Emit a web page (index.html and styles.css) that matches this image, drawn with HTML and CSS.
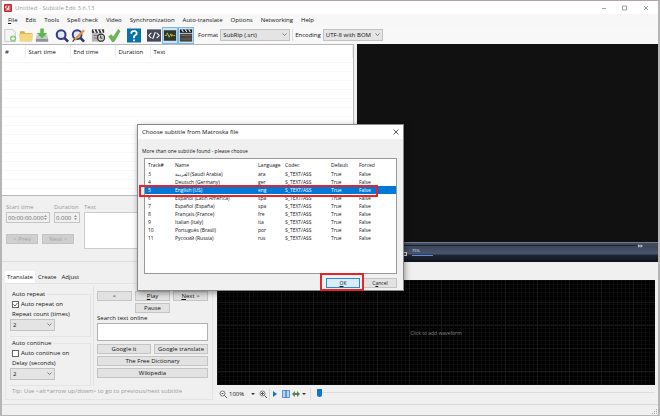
FILE: index.html
```html
<!DOCTYPE html>
<html lang="en">
<head>
    <meta charset="UTF-8">
    <meta name="viewport" content="width=device-width, initial-scale=1.0">
    <title>Untitled - Subtitle Edit 3.6.13</title>
    <link rel="stylesheet" href="styles.css">
</head>
<body>
    <div class="window">
        <header class="titlebar">
            <svg class="logo" viewBox="0 0 8 8"><rect width="8" height="8" rx="1" fill="#c8202c"/><path d="M3.5 2H1.5v2h2v2h-2M6.5 2h-2v4h2M4.5 4h2" fill="none" stroke="#fff" stroke-width=".8"/></svg>
            <span class="title">Untitled - Subtitle Edit 3.6.13</span>
            <svg class="win-buttons" viewBox="0 0 47 6"><path d="M0 3.500h4M20.500 1h4v4h-4zM42 1l4 4M46 1l-4 4" fill="none" stroke="#888" stroke-width=".8"/></svg>
        </header>

        <nav class="menubar">
            <a href="#"><u>F</u>ile</a>
            <a href="#">Edit</a>
            <a href="#">Tools</a>
            <a href="#">Spell check</a>
            <a href="#">Video</a>
            <a href="#">Synchronization</a>
            <a href="#">Auto-translate</a>
            <a href="#">Options</a>
            <a href="#">Networking</a>
            <a href="#">Help</a>
        </nav>

        <div class="toolbar">
            <button class="tool" aria-label="New"><svg viewBox="0 0 16 16"><path d="M2 1h9l3 3v11H2z" fill="#f4f4f4" stroke="#c4c4c4"/><circle cx="11.500" cy="11.500" r="3.500" fill="#8cc97a"/><path d="M11.500 9.500v4M9.500 11.500h4" stroke="#fff" stroke-width="1.300"/></svg></button>
            <button class="tool" aria-label="Open"><svg viewBox="0 0 16 16"><path d="M1 3h5l1 2h8v9H1z" fill="#d9ac45"/><path d="M0 6h16l-1 9H1z" fill="#f3d682"/></svg></button>
            <button class="tool" aria-label="Save"><svg viewBox="0 0 16 16"><path d="M2 7h12l1 5v3H1v-3z" fill="#c3c8cb"/><path d="M1 12h14v3H1z" fill="#8d9499"/><path d="M6 0h4v5h4l-6 6-6-6h4z" fill="#55b94c"/></svg></button>
            <span class="sep"></span>
            <button class="tool" aria-label="Find"><svg viewBox="0 0 16 16"><path d="M10 10l5 5" stroke="#303469" stroke-width="3"/><circle cx="7" cy="7" r="5" fill="#e3e9fa" stroke="#373c87" stroke-width="2.400"/></svg></button>
            <button class="tool" aria-label="Replace"><svg viewBox="0 0 16 16"><path d="M10 10l5 5" stroke="#303469" stroke-width="3"/><circle cx="7" cy="7" r="5" fill="#e3e9fa" stroke="#373c87" stroke-width="2.200"/><path d="M15 2L4 13" stroke="#e19535" stroke-width="2.500"/><path d="M4 12l-2 3" stroke="#553b25" stroke-width="1.500"/></svg></button>
            <span class="sep"></span>
            <button class="tool" aria-label="Visual sync"><svg viewBox="0 0 16 16"><path d="M1 5h12v10H1z" fill="#b5b5b5"/><path d="M1 1h14v4H1z" fill="#333"/><path d="M3 1l2 4M7 1l2 4M11 1l2 4" stroke="#fff" stroke-width="1.500"/><path d="M3 8h6M3 11h5" stroke="#777"/><circle cx="11.500" cy="10.500" r="4" fill="#d0d0d0" stroke="#333" stroke-width="1.500"/><path d="M11 8v3h2" fill="none" stroke="#222"/></svg></button>
            <button class="tool" aria-label="Spell check"><svg viewBox="0 0 16 16"><path d="M2 9l3-2 2 3 6-9 2 2-7 12H6z" fill="#6bb756" stroke="#4c963e" stroke-width=".6"/></svg></button>
            <span class="sep"></span>
            <button class="tool" aria-label="Help"><svg viewBox="0 0 16 16"><rect width="16" height="16" fill="#0873aa"/><path d="M5 6V4.500L6.500 3h3L11 4.500v2L8 9v2" fill="none" stroke="#fff" stroke-width="2"/><path d="M7 12.500h2v2H7z" fill="#fff"/></svg></button>
            <span class="sep"></span>
            <button class="tool" aria-label="Source view"><svg viewBox="0 0 16 16"><rect y="1" width="16" height="14" fill="#454a5b"/><path d="M5 5L2 8l3 3M11 5l3 3-3 3M9.500 4l-3 8" fill="none" stroke="#fff" stroke-width="1.200"/></svg></button>
            <button class="tool on" aria-label="Waveform"><svg viewBox="0 0 16 16"><rect x="1" y="2" width="14" height="12" fill="#30342f"/><path d="M2 8h2l1-3 2 5 2-4 1 3 1-2 1 1h2" fill="none" stroke="#b7c739"/></svg></button>
            <button class="tool on" aria-label="Video"><svg viewBox="0 0 16 16"><path d="M1 6h14v9H1z" fill="#48443f"/><path d="M1 1h14v4H1z" fill="#202020"/><path d="M3 1l2 3M7 1l2 3M11 1l2 3" stroke="#e0e0e0" stroke-width="1.300"/><path d="M2 8h12M2 12h12" stroke="#6e6a66"/></svg></button>
            <label class="format" for="format">Format</label>
            <select id="format" class="select-format"><option>SubRip (.srt)</option></select>
            <span class="line"></span>
            <label for="encoding">Encoding</label>
            <select id="encoding" class="select-encoding"><option>UTF-8 with BOM</option></select>
        </div>

        <div class="upper">
            <section class="left">
                <div class="subtitles">
                    <table class="list">
                        <thead>
                            <tr><th class="c-num">#</th><th class="c-start">Start time</th><th class="c-end">End time</th><th class="c-dur">Duration</th><th>Text</th></tr>
                        </thead>
                    </table>
                </div>
                <div class="edit">
                    <div class="edit-times">
                        <div class="field">
                            <label for="start">Start time</label>
                            <div class="spin"><input id="start" value="00:00:00.000" disabled><svg viewBox="0 0 4 8"><path d="M0 3l2-2 2 2zM0 5l2 2 2-2z" fill="#777"/></svg></div>
                        </div>
                        <div class="field">
                            <label for="duration">Duration</label>
                            <div class="spin"><input id="duration" value="0.000" disabled><svg viewBox="0 0 4 8"><path d="M0 3l2-2 2 2zM0 5l2 2 2-2z" fill="#777"/></svg></div>
                        </div>
                        <div class="nav-buttons">
                            <button class="btn" disabled>&lt; Prev</button>
                            <button class="btn" disabled>Next &gt;</button>
                        </div>
                    </div>
                    <div class="field grow">
                        <label for="text">Text</label>
                        <textarea id="text" disabled></textarea>
                    </div>
                </div>
            </section>
            <section class="video">
                <div class="screen"></div>
                <div class="player">
                    <div class="seek"></div>
                    <svg class="forward" viewBox="0 0 6 4"><path d="M0 0l3 2-3 2zM3 0l3 2-3 2z" fill="#aebbd4"/></svg>
                    <div class="volume"><svg viewBox="0 0 4 4"><rect x=".5" y=".5" width="3" height="3" fill="none" stroke="#ddd"/></svg><span>75%</span></div>
                </div>
            </section>
        </div>

        <div class="lower">
            <section class="tools">
                <div class="tabs">
                    <button class="tab active">Translate</button>
                    <button class="tab">Create</button>
                    <button class="tab">Adjust</button>
                </div>
                <div class="tab-page">
                    <div class="columns">
                        <div class="options">
                            <fieldset>
                                <legend>Auto repeat</legend>
                                <label class="check"><input type="checkbox" checked>Auto repeat on</label>
                                <label for="repeat">Repeat count (times)</label>
                                <select id="repeat"><option>2</option></select>
                            </fieldset>
                            <fieldset>
                                <legend>Auto continue</legend>
                                <label class="check"><input type="checkbox">Auto continue on</label>
                                <label for="delay">Delay (seconds)</label>
                                <select id="delay"><option>2</option></select>
                            </fieldset>
                        </div>
                        <div class="actions">
                            <div class="row three">
                                <button class="btn">&lt;</button>
                                <button class="btn"><u>P</u>lay</button>
                                <button class="btn"><u>N</u>ext &gt;</button>
                                <button class="btn pause">Pause</button>
                            </div>
                            <label for="search">Search text online</label>
                            <textarea id="search"></textarea>
                            <div class="row two">
                                <button class="btn">Google it</button>
                                <button class="btn">Google translate</button>
                                <button class="btn wide">The Free Dictionary</button>
                                <button class="btn wide">Wikipedia</button>
                            </div>
                        </div>
                    </div>
                    <p class="tip">Tip: Use &lt;alt+arrow up/down&gt; to go to previous/next subtitle</p>
                </div>
            </section>
            <section class="wave">
                <div class="waveform">Click to add waveform</div>
                <div class="wave-bar">
                    <button class="mini" aria-label="Zoom out"><svg viewBox="0 0 8 8"><circle cx="3.500" cy="3.500" r="2.500" fill="#fff" stroke="#777"/><path d="M2.500 3.500h2M5.500 5.500L8 8" stroke="#555"/></svg></button>
                    <span class="zoom">100%</span>
                    <span class="caret"></span>
                    <button class="mini" aria-label="Zoom in"><svg viewBox="0 0 8 8"><circle cx="3.500" cy="3.500" r="2.500" fill="#fff" stroke="#777"/><path d="M2 3.500h3M3.500 2v3M5.500 5.500L8 8" stroke="#555"/></svg></button>
                    <span class="line"></span>
                    <button class="mini" aria-label="Play"><svg viewBox="0 0 8 8"><path d="M1 1l4 3-4 3z" fill="#1675c8"/></svg></button>
                    <button class="mini" aria-label="Center on position"><svg viewBox="0 0 8 8"><rect x=".5" y=".5" width="7" height="7" fill="#b4d2f3" stroke="#5d9cdf"/><path d="M4 0v8" stroke="#2a62b0"/></svg></button>
                    <button class="mini" aria-label="Speed"><svg viewBox="0 0 8 8"><path d="M0 4l3-3v2h2V1l3 3-3 3V5H3v2z" fill="#647b58"/></svg></button>
                    <span class="caret"></span>
                    <span class="line"></span>
                    <input class="position" type="range" min="0" max="100" value="0" aria-label="Position">
                </div>
            </section>
        </div>
        <footer class="status"><svg viewBox="0 0 6 6"><path d="M4 0h1v1H4zM2 2h1v1H2zM4 2h1v1H4zM0 4h1v1H0zM2 4h1v1H2zM4 4h1v1H4z" fill="#aaa"/></svg></footer>
    </div>

    <div class="dialog" role="dialog" aria-labelledby="dialog-title">
        <div class="dialog-head">
            <span id="dialog-title">Choose subtitle from Matroska file</span>
            <button class="close" aria-label="Close"><svg viewBox="0 0 6 6"><path d="M.5 .5l5 5M5.5 .5l-5 5" stroke="#333" stroke-width=".8"/></svg></button>
        </div>
        <p class="dialog-text">More than one subtitle found - please choose</p>
        <div class="tracks">
            <table>
                <thead>
                    <tr><th class="t-num">Track#</th><th class="t-name">Name</th><th class="t-lang">Language</th><th class="t-codec">Codec</th><th class="t-def">Default</th><th>Forced</th></tr>
                </thead>
                <tbody>
                    <tr><td>3</td><td>العربية (Saudi Arabia)</td><td>ara</td><td>S_TEXT/ASS</td><td>True</td><td>False</td></tr>
                    <tr><td>4</td><td>Deutsch (Germany)</td><td>ger</td><td>S_TEXT/ASS</td><td>True</td><td>False</td></tr>
                    <tr class="selected"><td>5</td><td>English (US)</td><td>eng</td><td>S_TEXT/ASS</td><td>True</td><td>False</td></tr>
                    <tr><td>6</td><td>Español (Latin America)</td><td>spa</td><td>S_TEXT/ASS</td><td>True</td><td>False</td></tr>
                    <tr><td>7</td><td>Español (España)</td><td>spa</td><td>S_TEXT/ASS</td><td>True</td><td>False</td></tr>
                    <tr><td>8</td><td>Français (France)</td><td>fre</td><td>S_TEXT/ASS</td><td>True</td><td>False</td></tr>
                    <tr><td>9</td><td>Italian (Italy)</td><td>ita</td><td>S_TEXT/ASS</td><td>True</td><td>False</td></tr>
                    <tr><td>10</td><td>Português (Brasil)</td><td>por</td><td>S_TEXT/ASS</td><td>True</td><td>False</td></tr>
                    <tr><td>11</td><td>Русский (Russia)</td><td>rus</td><td>S_TEXT/ASS</td><td>True</td><td>False</td></tr>
                </tbody>
            </table>
            <div class="mark mark-row"></div>
        </div>
        <div class="dialog-buttons">
            <div class="ok-wrap">
                <button class="btn ok"><u>O</u>K</button>
                <div class="mark mark-ok"></div>
            </div>
            <button class="btn">C<u>a</u>ncel</button>
        </div>
    </div>
</body>
</html>
```

FILE: styles.css
```css
* {
    box-sizing: border-box;
}

body {
    margin: 0;
    font-family: "Open Sans", "Noto Sans", sans-serif;
    font-size: 6px;
    line-height: 10px;
    color: #111;
    background: #f0f0f0;
}

button, input, select, textarea {
    font: inherit;
    color: inherit;
    margin: 0;
    padding: 0;
    border-radius: 0;
}

svg {
    display: block;
}

p {
    margin: 0;
}

.window {
    display: flex;
    flex-direction: column;
    min-height: 100vh;
    border: 1px solid #b5b5b5;
    border-top-color: #b9a0a8;
    border-left-width: 2px;
    border-right-width: 2px;
}

.titlebar {
    display: flex;
    align-items: center;
    height: 13px;
    padding: 0 9px 0 2px;
    background: #fff;
    color: #999;
}

.logo {
    width: 8px;
    height: 8px;
}

.title {
    margin-left: 3px;
}

.win-buttons {
    width: 47px;
    height: 6px;
    margin-left: auto;
}

.menubar {
    display: flex;
    gap: 8px;
    height: 12px;
    padding: 1px 6px;
    background: #f7f7f7;
}

.menubar a {
    color: #111;
    text-decoration: none;
}

/* toolbar */
.toolbar {
    display: flex;
    align-items: center;
    height: 18px;
    background: #f8f8f8;
}

.tool {
    flex: none;
    width: 16px;
    height: 17px;
    padding: 1px;
    border: none;
    background: none;
}

.tool svg {
    width: 14px;
    height: 15px;
}

.tool.on {
    padding: 0;
    border: 1px solid #7ab8e4;
    background: #cce4f7;
}

.sep {
    width: 4px;
}

.line {
    width: 1px;
    height: 12px;
    margin: 0 2px;
    background: #ddd;
}

select {
    appearance: none;
    height: 12px;
    padding: 0 2px;
    border: 1px solid #c2c2c2;
    background: #e4e4e4 url("data:image/svg+xml,%3Csvg xmlns='http://www.w3.org/2000/svg' viewBox='0 0 5 4'%3E%3Cpath d='M.5 .5l2 2 2-2' fill='none' stroke='%23555' stroke-width='.7'/%3E%3C/svg%3E") no-repeat right 2px center / 5px 4px;
}

.format {
    margin-left: 4px;
}

.select-format {
    width: 70px;
    margin-left: 2px;
}

.select-encoding {
    width: 60px;
    margin-left: 2px;
}

/* subtitle list and video */
.upper {
    display: grid;
    grid-template-columns: 355fr 301fr;
    height: 218px;
}

.left {
    display: flex;
    flex-direction: column;
    padding-right: 3px;
}

.subtitles {
    height: 152px;
    border: 1px solid #b8b8b8;
    border-left: none;
    background: #fff repeating-linear-gradient(transparent 0 8px, #f8f8f8 8px 9px);
}

table {
    width: 100%;
    border-collapse: collapse;
    table-layout: fixed;
}

th, td {
    padding: 0;
    text-align: left;
    font-weight: normal;
    white-space: nowrap;
}

.list th {
    height: 13px;
    padding-left: 3px;
    border-right: 1px solid #eee;
    background: #fff;
}

.list .c-num {
    width: 23px;
}

.list .c-start, .list .c-end {
    width: 45px;
}

.list .c-dur {
    width: 35px;
}

.edit {
    display: flex;
    flex: 1;
    gap: 4px;
    padding: 6px 4px 12px;
    border-bottom: 1px solid #ddd;
    color: #999;
}

.edit-times {
    display: grid;
    grid-template-columns: 44px 26px;
    grid-template-rows: 21px 10px;
    gap: 11px 4px;
}

.nav-buttons {
    display: grid;
    grid-column: 1 / 3;
    grid-template-columns: 32px 32px;
    gap: 4px;
}

.field {
    display: flex;
    flex-direction: column;
}

.grow {
    flex: 1;
}

.spin {
    display: flex;
    align-items: center;
    height: 11px;
    padding: 0 2px 0 1px;
    border: 1px solid #c4c4c4;
    color: #666;
}

.spin input {
    flex: 1;
    min-width: 0;
    height: 9px;
    border: none;
    background: none;
}

.spin svg {
    width: 3px;
    height: 7px;
}

textarea {
    display: block;
    width: 100%;
    border: 1px solid #b0b0b0;
    background: #fff;
    resize: none;
}

#text {
    height: 37px;
    border-color: #ccc;
}

.btn {
    height: 10px;
    border: 1px solid #c4c4c4;
    background: #e2e2e2;
    line-height: 8px;
    white-space: nowrap;
}

.btn:disabled {
    background: #cfcfcf;
    color: #a2a2a2;
}

.video {
    display: flex;
    flex-direction: column;
}

.screen {
    flex: 1;
    background: #111;
}

.player {
    position: relative;
    height: 20px;
    border-top: 1px solid #737b8c;
    background: linear-gradient(#414a5e 0 3px, #3c465b 3px, #4a556c 11px, #202734 12px, #0d131d);
}

.seek {
    height: 1px;
    margin: 2px 21px 0 0;
    background: #1b2130;
}

.forward {
    position: absolute;
    top: 1px;
    right: 15px;
    width: 5px;
    height: 4px;
}

.volume {
    position: absolute;
    top: 5px;
    left: 46px;
    display: flex;
    align-items: flex-end;
    gap: 5px;
    font-size: 4px;
    line-height: 6px;
    color: #d5e2ff;
}

.volume svg {
    width: 4px;
    height: 4px;
}

.volume span {
    width: 21px;
    height: 8px;
    border-bottom: 1px solid #5c8be8;
}

/* lower part */
.lower {
    display: grid;
    grid-template-columns: 215fr 441fr;
    flex: 1;
}

.tools {
    padding: 9px 4px 4px 3px;
}

.tabs {
    display: flex;
    gap: 1px;
}

.tab {
    height: 12px;
    padding: 0 2px;
    border: none;
    background: none;
}

.tab.active {
    padding: 0 2px;
    background: #fff;
}

.tab-page {
    padding: 2px 4px 3px 4px;
    border: 1px solid #e4e4e4;
}

.columns {
    display: grid;
    grid-template-columns: 84px 1fr;
    gap: 3px;
}

.options {
    display: flex;
    flex-direction: column;
    gap: 1px;
    padding-top: 3px;
    border-right: 1px solid #e2e2e2;
}

fieldset {
    display: flex;
    flex-direction: column;
    align-items: flex-start;
    height: 48px;
    min-width: 0;
    margin: 0 2px 0 0;
    padding: 0;
    border: 1px solid #e4e4e4;
    border-left: none;
}

legend {
    padding: 0 2px;
}

fieldset > label {
    height: 10px;
    padding-left: 2px;
}

.check {
    display: flex;
    align-items: center;
    gap: 2px;
}

.check input {
    appearance: none;
    width: 7px;
    height: 7px;
    border: 1px solid #666;
    background: #fff;
}

.check input:checked {
    background: #fff url("data:image/svg+xml,%3Csvg xmlns='http://www.w3.org/2000/svg' viewBox='0 0 5 5'%3E%3Cpath d='M.5 2.500l1.500 1.500 2.500-3' fill='none' stroke='%23333' stroke-width='.8'/%3E%3C/svg%3E");
}

fieldset select {
    width: 45px;
}

.actions {
    padding-top: 5px;
}

.row {
    display: grid;
    gap: 2px 3px;
}

.three {
    grid-template-columns: repeat(3, 1fr);
}

.two {
    grid-template-columns: 1fr 1fr;
    margin-top: 3px;
}

.pause {
    grid-column: 2;
}

.wide {
    grid-column: 1 / 3;
}

#search {
    height: 18px;
}

.tip {
    padding-left: 2px;
    color: #999;
    white-space: nowrap;
}

.wave {
    display: flex;
    flex-direction: column;
    padding: 18px 3px 0 0;
}

.waveform {
    display: flex;
    align-items: center;
    justify-content: center;
    height: 105px;
    background:
        repeating-linear-gradient(90deg, #181818 0 1px, transparent 1px 32px),
        repeating-linear-gradient(transparent 0 22px, #181818 22px 23px),
        repeating-linear-gradient(90deg, #0b0b0b 0 1px, transparent 1px 4px),
        repeating-linear-gradient(#0b0b0b 0 1px, #000 1px 4px);
    color: #888;
    font-size: 5px;
}

.wave-bar {
    display: flex;
    align-items: center;
    height: 18px;
}

.mini {
    width: 8px;
    height: 8px;
    margin-right: 2px;
    border: none;
    background: none;
}

.wave-bar .mini:first-child {
    margin-left: 2px;
}

.mini svg {
    width: 8px;
    height: 8px;
}

.zoom {
    width: 22px;
}

.caret {
    margin-right: 4px;
    border: 2px solid transparent;
    border-top-color: #333;
    border-bottom: none;
}

.wave-bar .line {
    margin: 0 2px 0 0;
}

.position {
    appearance: none;
    flex: 1;
    height: 12px;
    margin-left: 4px;
    background: linear-gradient(transparent 4px, #ddd 4px 5px, transparent 5px);
}

.position::-webkit-slider-thumb {
    appearance: none;
    width: 5px;
    height: 8px;
    margin-top: -3px;
    border-radius: 0 0 3px 3px;
    background: #0b76d2;
}

.status {
    display: flex;
    align-items: flex-end;
    justify-content: flex-end;
    height: 11px;
    border-top: 1px solid #d8d8d8;
}

.status svg {
    width: 6px;
    height: 6px;
}

/* dialog over the main window */
.dialog {
    position: absolute;
    top: 124px;
    left: 137px;
    width: 267px;
    border: 1px solid #888;
    background: #f0f0f0;
    box-shadow: 1px 2px 6px rgba(0, 0, 0, 0.4);
}

.dialog-head {
    display: flex;
    align-items: center;
    justify-content: space-between;
    height: 14px;
    padding: 0 4px;
    background: #fff;
}

.close {
    width: 6px;
    height: 6px;
    border: none;
    background: none;
}

.dialog-text {
    padding: 7px 4px 2px;
    font-size: 5px;
}

.tracks {
    position: relative;
    height: 116px;
    margin: 0 6px;
    border: 1px solid #999;
    background: #fff;
    font-size: 5px;
    line-height: 8px;
}

.tracks th {
    height: 11px;
    padding-left: 3px;
}

.tracks td {
    height: 8px;
    padding-left: 3px;
}

.t-num {
    width: 27px;
}

.t-name {
    width: 83px;
}

.t-lang {
    width: 27px;
}

.t-codec {
    width: 46px;
}

.t-def {
    width: 28px;
}

.selected td {
    background: #0078d7;
    color: #fff;
}

.mark {
    position: absolute;
    border: 2px solid #e3242b;
    pointer-events: none;
}

.mark-row {
    top: 26px;
    left: -6px;
    right: 18px;
    height: 12px;
}

.dialog-buttons {
    display: flex;
    justify-content: flex-end;
    gap: 3px;
    padding: 4px 6px 2px;
    font-size: 5px;
}

.dialog-buttons .btn {
    display: block;
    width: 34px;
}

.ok-wrap {
    position: relative;
}

.dialog-buttons .ok {
    border-color: #2a8ad4;
    background: #dcebf8;
}

.mark-ok {
    top: -5px;
    left: -6px;
    right: -4px;
    height: 18px;
}
```
